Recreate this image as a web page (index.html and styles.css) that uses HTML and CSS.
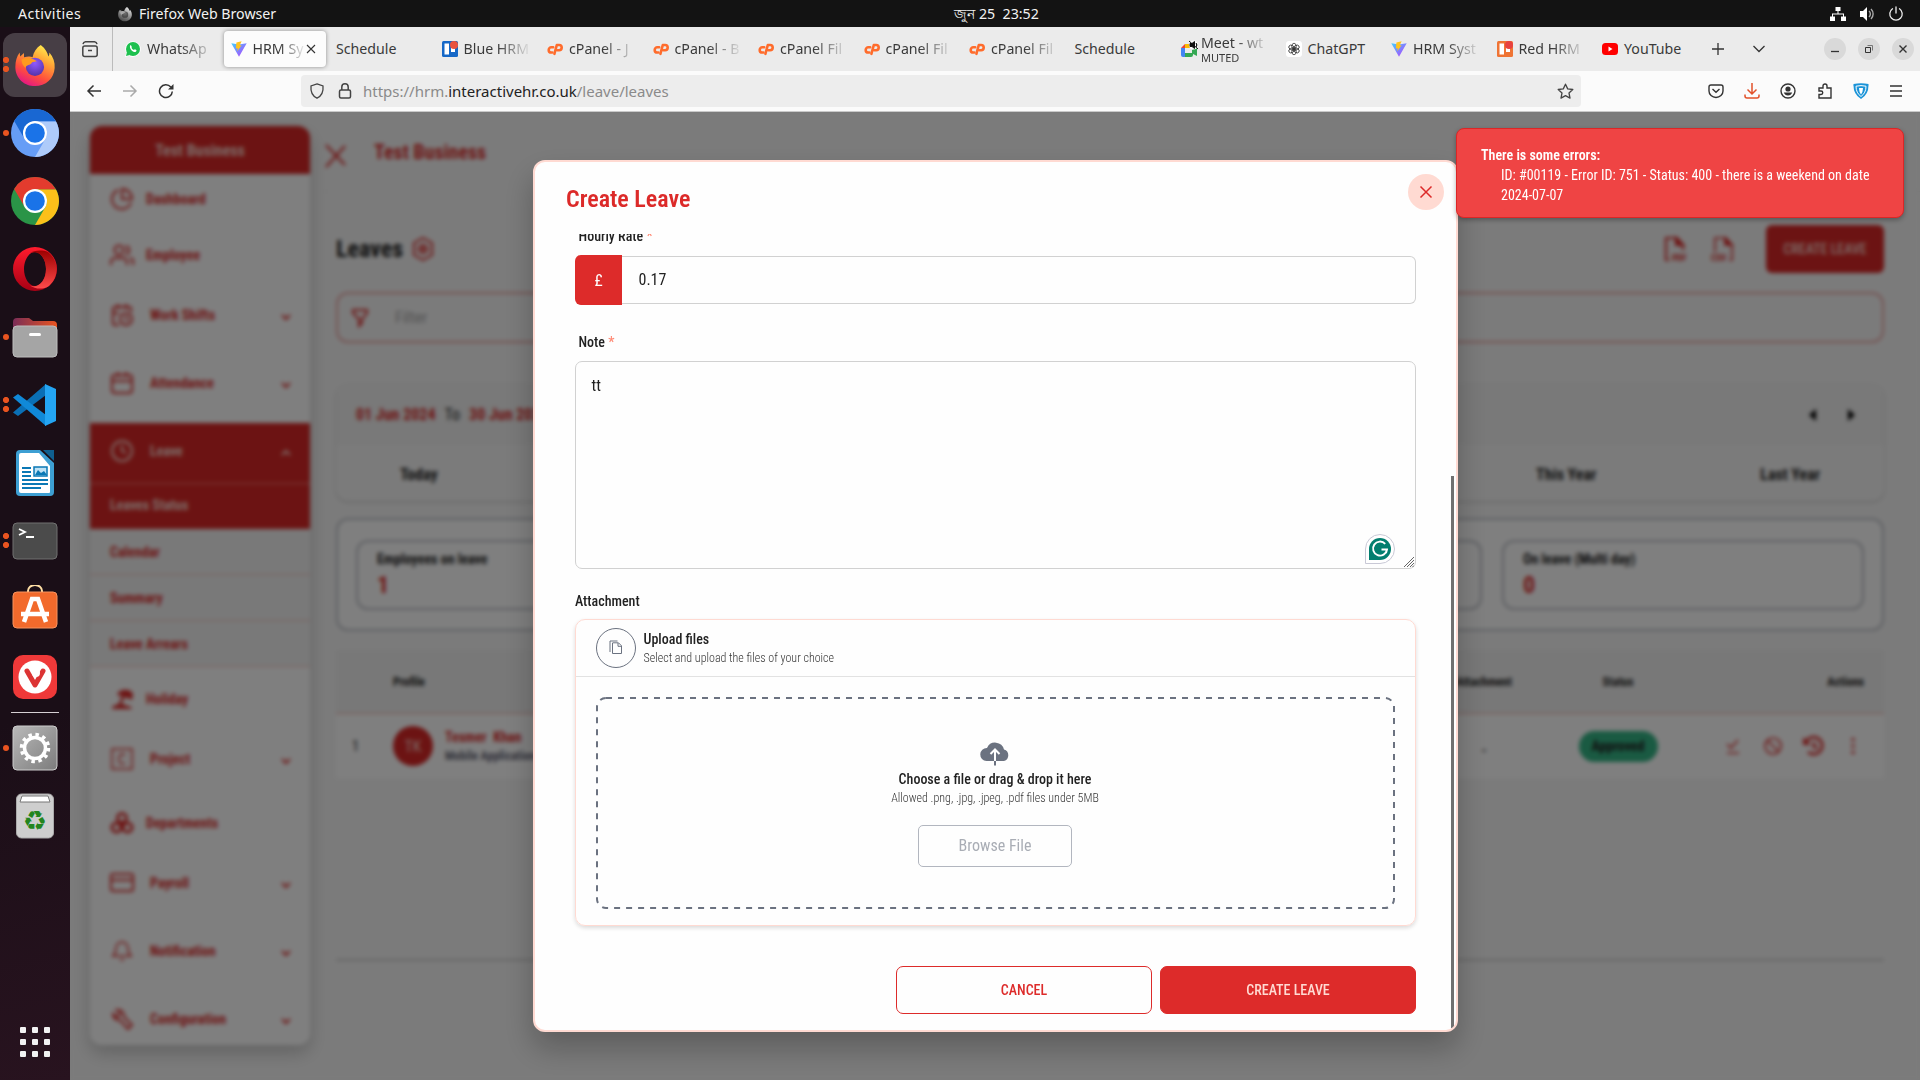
FILE: index.html
```html
<!DOCTYPE html>
<html lang="en">
<head>
<meta charset="utf-8">
<title>HRM System</title>
<link rel="stylesheet" href="styles.css">
</head>
<body>
<svg class="defs" width="0" height="0">
  <defs>
    <linearGradient id="vite-a" x1="0" y1="0" x2="1" y2="1"><stop offset="0" stop-color="#41d1ff"/><stop offset="1" stop-color="#bd34fe"/></linearGradient>
    <linearGradient id="fox-a" x1="0.8" y1="0" x2="0.3" y2="1"><stop offset="0" stop-color="#fff44f"/><stop offset="0.35" stop-color="#ffa436"/><stop offset="0.7" stop-color="#ff4f3c"/><stop offset="1" stop-color="#e31587"/></linearGradient>
    <radialGradient id="fox-b" cx="0.5" cy="0.3" r="0.8"><stop offset="0" stop-color="#9059ff"/><stop offset="1" stop-color="#4b2d9c"/></radialGradient>
    <linearGradient id="steel" x1="0" y1="0" x2="1" y2="1"><stop offset="0" stop-color="#b9b9b9"/><stop offset="1" stop-color="#7c7c7c"/></linearGradient>
    <linearGradient id="folder" x1="0" y1="0" x2="1" y2="0"><stop offset="0" stop-color="#7a2d57"/><stop offset="1" stop-color="#e95420"/></linearGradient>
    <linearGradient id="opera-a" x1="0" y1="0" x2="0" y2="1"><stop offset="0" stop-color="#ff1b2d"/><stop offset="1" stop-color="#a70014"/></linearGradient>
    <linearGradient id="opera-b" x1="0" y1="0" x2="0" y2="1"><stop offset="0" stop-color="#9c0000"/><stop offset="1" stop-color="#ff4b4b"/></linearGradient>
    <symbol id="cpanel" viewBox="0 0 16 16"><g fill="none" stroke="#ff6c2c" stroke-width="2.6" stroke-linecap="round" stroke-linejoin="round"><path d="M6.2 6.3H4.3a2.6 2.6 0 0 0 0 5.2h1"/><path d="M7.4 12.8 9.8 4h2.3a2.6 2.6 0 0 1 0 5.2h-1.6"/></g></symbol>
    <symbol id="vite" viewBox="0 0 16 16"><path d="M.3 2.2 8 15.7l7.7-13.5L8 3.6z" fill="url(#vite-a)"/><path d="M10.6.3 5.4 1.4l-.5 6.2 1.9-.4-.6 3 4.4-5.9-1.9.3z" fill="#ffc51f"/></symbol>
    <symbol id="fox" viewBox="0 0 48 48"><path d="M30 3c5 4 7 8 8 12 1-1 1-3 1-4 4 5 6 10 5.500 16C44 38 35 46 24 46S3.500 38 3.500 26C3.500 20 5 15 8 11l.5 4 4-3.500V16c4-1 7-1 9 0 1-6 4-10 8.500-13z" fill="url(#fox-a)"/><circle cx="24" cy="26" r="9.500" fill="url(#fox-b)"/><path d="M10 18c5-2 10-2 16 2l-5 1c-2 4-6 2-7 6-3-3-4-5-4-9z" fill="#ff9a1f"/></symbol>
    <symbol id="down" viewBox="0 0 24 24"><path d="m6 9 6 6 6-6" fill="none" stroke="currentColor" stroke-width="3"/></symbol>
  </defs>
</svg>

<header class="topbar">
  <span class="topbar-activities">Activities</span>
  <span class="topbar-app"><svg class="gray" width="16" height="16"><use href="#fox"/></svg>Firefox Web Browser</span>
  <span class="topbar-clock">জুন 25&nbsp; 23:52</span>
  <span class="topbar-status">
    <svg width="16" height="16" viewBox="0 0 16 16" fill="#fff"><path d="M5.500 1h5v4h-2v2.500H14v3h2v4.500h-5v-4.500h2V8.500H3v2h2V15H0v-4.500h2v-3h5.500V5h-2z"/></svg>
    <svg width="16" height="16" viewBox="0 0 16 16" fill="#fff"><path d="M1 5h3l4-4v14l-4-4H1z"/><path d="M10 5a4 4 0 0 1 0 6M12 3a7 7 0 0 1 0 10" fill="none" stroke="#aaa" stroke-width="1.400"/></svg>
    <svg width="16" height="16" viewBox="0 0 16 16" fill="none" stroke="#eee" stroke-width="1.300" stroke-linecap="round"><path d="M8 1v6M4.500 2.800a6.200 6.200 0 1 0 7 0"/></svg>
  </span>
</header>

<div class="desktop">
<nav class="dock">
  <div class="dock-slot active dots2"><svg width="46" height="46"><use href="#fox"/></svg></div>
  <div class="dock-slot dots1"><svg width="48" height="48" viewBox="0 0 48 48"><circle cx="24" cy="24" r="24" fill="#669df6"/><path d="M24 0a24 24 0 0 1 21 12.400H24A12 12 0 0 0 13.600 30L3.200 12A24 24 0 0 1 24 0z" fill="#1967d2"/><path d="M45 12.400A24 24 0 0 1 24 48l10.400-18A12 12 0 0 0 24 12.400z" fill="#aecbfa"/><circle cx="24" cy="24" r="12" fill="#fff"/><circle cx="24" cy="24" r="9.800" fill="#1a73e8"/></svg></div>
  <div class="dock-slot"><svg width="48" height="48" viewBox="0 0 48 48"><circle cx="24" cy="24" r="24" fill="#2a9447"/><path d="M24 0a24 24 0 0 1 21 12.400H24A12 12 0 0 0 13.600 30L3.200 12A24 24 0 0 1 24 0z" fill="#e33b2e"/><path d="M45 12.400A24 24 0 0 1 24 48l10.400-18A12 12 0 0 0 24 12.400z" fill="#fcc01a"/><circle cx="24" cy="24" r="12" fill="#fff"/><circle cx="24" cy="24" r="9.800" fill="#1a73e8"/></svg></div>
  <div class="dock-slot"><svg width="44" height="44" viewBox="0 0 44 44"><path d="M22 0a22 22 0 1 0 0 44 22 22 0 0 0 0-44zm0 5c6 0 11 8 11 17s-5 17-11 17-11-8-11-17S16 5 22 5z" fill="url(#opera-a)" fill-rule="evenodd"/><path d="M17 6c3-2 11-4 18-1a22 22 0 0 1 1 34c-6 4-14 3-19-.5 8 3 16-4 16-16.500S25 3 17 6z" fill="url(#opera-b)"/></svg></div>
  <div class="dock-slot dots1"><svg width="46" height="42" viewBox="0 0 46 42"><path d="M1 6a4 4 0 0 1 4-4h12l4 3h20a4 4 0 0 1 4 4v12H1z" fill="url(#folder)"/><rect x="1" y="10" width="44" height="31" rx="4" fill="#a5a5a5" stroke="#bdbdbd"/><rect x="17" y="17" width="12" height="3" rx="1.500" fill="#fff"/></svg></div>
  <div class="dock-slot dots2"><svg width="44" height="44" viewBox="0 0 44 44"><path d="M0 29.500 5 33 33 12V1z" fill="#0a6fb5"/><path d="M0 14.500 5 11l28 21v11L0 14.500z" fill="#1089d8"/><path d="M32 1l11 5v32l-11 5z" fill="#24a5f3"/></svg></div>
  <div class="dock-slot"><svg width="38" height="46" viewBox="0 0 38 46"><path d="M4 0h20l14 13v29a4 4 0 0 1-4 4H4a4 4 0 0 1-4-4V4a4 4 0 0 1 4-4z" fill="#3d9fd3"/><path d="M27 0h11v11z" fill="#0f5f8f"/><path d="M5 3h18l11 13v26a1 1 0 0 1-1 1H5a2 2 0 0 1-2-2V5a2 2 0 0 1 2-2z" fill="#fff"/><g fill="#0a78b5"><path d="M6 17h9v2H6zM6 21h9v2H6zM6 25h9v2H6zM6 29h26v2H6zM6 33h26v2H6zM6 37h19v2H6z"/></g><path d="M18 17h13v9H18z" fill="#bfe2f5" stroke="#0a78b5" stroke-width="1.500"/><path d="m19 25 3-5 3 3 3-2 3 4z" fill="#0a78b5"/></svg></div>
  <div class="dock-slot dots2"><svg width="46" height="38" viewBox="0 0 46 38"><rect x="1" y="1" width="44" height="36" rx="4" fill="#4b4b4b" stroke="#707070"/><path d="m7 7 6 3-6 3M14 15h8" fill="none" stroke="#fff" stroke-width="1.800"/></svg></div>
  <div class="dock-slot lift"><svg width="46" height="44" viewBox="0 0 46 44"><path d="M16 9V6a7 6 0 0 1 14 0v3" fill="none" stroke="#ffdfa5" stroke-width="2"/><rect x="1" y="7" width="44" height="36" rx="4" fill="#f26a2c" stroke="#f7935f"/><path d="m12 37 8-23h6l8 23M9 29h28" fill="none" stroke="#fff" stroke-width="4.500"/></svg></div>
  <div class="dock-slot"><svg width="44" height="44" viewBox="0 0 44 44"><rect width="44" height="44" rx="10" fill="#ef3939"/><circle cx="22" cy="22" r="16.500" fill="#fff"/><path d="m14 16 8 14 8-14" fill="none" stroke="#dc3434" stroke-width="5" stroke-linecap="round" stroke-linejoin="round"/><circle cx="23" cy="18" r="4" fill="#fff"/></svg></div>
  <div class="dock-rule"></div>
  <div class="dock-slot dots1"><svg width="46" height="46" viewBox="0 0 46 46"><rect x="1" y="1" width="44" height="44" rx="4" fill="url(#steel)" stroke="#ccc"/><circle cx="23" cy="23" r="10.500" fill="none" stroke="#fff" stroke-width="3.500"/><circle cx="23" cy="23" r="13.500" fill="none" stroke="#fff" stroke-width="3.500" stroke-dasharray="3.500 3.570"/></svg></div>
  <div class="dock-slot"><svg width="38" height="46" viewBox="0 0 38 46"><rect x=".5" y="1" width="37" height="44" rx="5" fill="#cecece" stroke="#aaa"/><path d="M4 9 6 3h26l2 6z" fill="#fff" stroke="#777"/><text x="19" y="37" text-anchor="middle" class="recycle">♻</text></svg></div>
  <div class="dock-apps"><i></i><i></i><i></i><i></i><i></i><i></i><i></i><i></i><i></i></div>
</nav>

<section class="browser">
  <div class="tabs">
    <div class="tab-view"><svg width="18" height="18" viewBox="0 0 18 18" fill="none" stroke="#444" stroke-width="1.500"><rect x="1.800" y="6" width="14.400" height="10.500" rx="2"/><path d="M2 4.200a3 3 0 0 1 2.500-2.400h9A3 3 0 0 1 16 4.200M7 10.500h4"/></svg></div>
    <div class="tab"><svg width="16" height="16" viewBox="0 0 16 16"><path d="M0 16l1.200-4A7.800 7.800 0 1 1 4.300 15z" fill="#fff"/><circle cx="8" cy="8" r="7" fill="#1dc04e"/><path d="M1 15l1-4 3 3z" fill="#1dc04e"/><path d="M5 4.500c1-.8 1.500.5 1.800 1.500-.8 1 .8 2.800 2.200 3 .8-1 1-.8 2.500.3 0 1.500-1 2-2.500 1.700C6.500 10 4.500 7.500 5 4.500z" fill="#fff"/></svg><span class="fade">WhatsAp</span></div>
    <div class="tab current"><svg width="16" height="16"><use href="#vite"/></svg><span class="fade">HRM Sy</span><svg class="x" width="10" height="10" viewBox="0 0 10 10"><path d="m1 1 8 8M9 1 1 9" stroke="#333" stroke-width="1.100"/></svg></div>
    <div class="tab"><span class="fade">Schedule</span></div>
    <div class="tab"><svg width="16" height="16" viewBox="0 0 16 16"><rect width="16" height="16" rx="1.500" fill="#1668c7"/><rect x="2.500" y="2.500" width="4.500" height="11" fill="#fff"/><rect x="9" y="6" width="4" height="5" fill="#fff"/><circle cx="12" cy="4" r="4" fill="#e8523f"/></svg><span class="fade">Blue HRM</span></div>
    <div class="tab"><svg width="16" height="16"><use href="#cpanel"/></svg><span class="fade">cPanel - J</span></div>
    <div class="tab"><svg width="16" height="16"><use href="#cpanel"/></svg><span class="fade">cPanel - B</span></div>
    <div class="tab"><svg width="16" height="16"><use href="#cpanel"/></svg><span class="fade">cPanel Fil</span></div>
    <div class="tab"><svg width="16" height="16"><use href="#cpanel"/></svg><span class="fade">cPanel Fil</span></div>
    <div class="tab"><svg width="16" height="16"><use href="#cpanel"/></svg><span class="fade">cPanel Fil</span></div>
    <div class="tab"><span class="fade">Schedule</span></div>
    <div class="tab"><svg width="18" height="18" viewBox="0 0 18 18"><path d="M1 8 5 4v4z" fill="#ea4335"/><path d="M5 4h7v4H5z" fill="#fbbc04"/><path d="M1 8h4v9H3a2 2 0 0 1-2-2z" fill="#4285f4"/><path d="M5 13h7v-3l5-3v9l-4-2v1a2 2 0 0 1-2 2H5z" fill="#34a853"/><circle cx="13.500" cy="5" r="4.500" fill="#fff"/><path d="M10 3.500h2l2.500-2v7L12 6.500h-2zM9 1l9 8M16 3q2 2 0 4" stroke="#111" fill="#111"/></svg><span class="fade two">Meet - wt<small>MUTED</small></span></div>
    <div class="tab"><svg width="16" height="16" viewBox="0 0 16 16"><rect width="16" height="16" rx="3" fill="#fff"/><g fill="none" stroke="#333" stroke-width=".8"><ellipse cx="8" cy="5.500" rx="2.200" ry="3.300"/><ellipse cx="8" cy="5.500" rx="2.200" ry="3.300" transform="rotate(60 8 8)"/><ellipse cx="8" cy="5.500" rx="2.200" ry="3.300" transform="rotate(120 8 8)"/><ellipse cx="8" cy="5.500" rx="2.200" ry="3.300" transform="rotate(180 8 8)"/><ellipse cx="8" cy="5.500" rx="2.200" ry="3.300" transform="rotate(240 8 8)"/><ellipse cx="8" cy="5.500" rx="2.200" ry="3.300" transform="rotate(300 8 8)"/></g></svg><span class="fade full">ChatGPT</span></div>
    <div class="tab"><svg width="16" height="16"><use href="#vite"/></svg><span class="fade">HRM Syst</span></div>
    <div class="tab"><svg width="16" height="16" viewBox="0 0 16 16"><rect width="16" height="16" rx="1.500" fill="#ef7434"/><rect x="2.500" y="2.500" width="4.500" height="11" fill="#fff"/><rect x="9" y="6" width="4" height="5" fill="#fff"/><circle cx="12" cy="4" r="4" fill="#e8423f"/></svg><span class="fade">Red HRM</span></div>
    <div class="tab"><svg width="16" height="16" viewBox="0 0 16 16"><rect y="2" width="16" height="12" rx="3.500" fill="#f00"/><path d="m6.500 5.500 4 2.500-4 2.500z" fill="#fff"/></svg><span class="fade full">YouTube</span></div>
    <div class="tab-tools">
      <svg width="14" height="14" viewBox="0 0 14 14" stroke="#333" stroke-width="1.300"><path d="M7 1v12M1 7h12"/></svg>
      <svg width="14" height="14" viewBox="0 0 14 14" fill="none" stroke="#333" stroke-width="1.300"><path d="m1.500 4 5.500 5.500L12.500 4"/></svg>
    </div>
    <div class="window-buttons">
      <span><svg width="10" height="10" viewBox="0 0 10 10"><path d="M1 7.500h8" stroke="#333" stroke-width="1.300"/></svg></span>
      <span><svg width="10" height="10" viewBox="0 0 10 10" fill="none" stroke="#333"><path d="M1.500 3.500h5v5h-5z"/><path d="M3.500 1.500h5v5" stroke="#777"/></svg></span>
      <span><svg width="10" height="10" viewBox="0 0 10 10"><path d="m1.500 1.500 7 7M8.500 1.500l-7 7" stroke="#333" stroke-width="1.400"/></svg></span>
    </div>
  </div>

  <div class="toolbar">
    <div class="history">
      <svg width="16" height="16" viewBox="0 0 16 16" fill="none" stroke="#333" stroke-width="1.500"><path d="M15 8H2M7.500 2.500 2 8l5.500 5.500"/></svg>
      <svg width="16" height="16" viewBox="0 0 16 16" fill="none" stroke="#aaa" stroke-width="1.500"><path d="M1 8h13M8.500 2.500 14 8l-5.500 5.500"/></svg>
      <svg width="16" height="16" viewBox="0 0 16 16" fill="none" stroke="#333" stroke-width="1.500"><path d="M14.300 8.500A6.400 6.400 0 1 1 12.800 4"/><path d="M15.500 1v5.500H10z" fill="#333" stroke="none"/></svg>
    </div>
    <div class="urlbar">
      <svg width="16" height="16" viewBox="0 0 16 16" fill="none" stroke="#444" stroke-width="1.300"><path d="M8 .9 14 3c.5 5-1.500 10-6 12.200C3.500 13 1.500 8 2 3z"/></svg>
      <svg class="lock" width="14" height="16" viewBox="0 0 14 16" fill="none" stroke="#444" stroke-width="1.500"><rect x="1.500" y="7" width="11" height="8" rx="1.500"/><path d="M3.800 7V4a3.200 3.200 0 0 1 6.400 0v3"/></svg>
      <span class="url">https://hrm.<b>interactivehr.co.uk</b>/leave/leaves</span>
      <svg class="star" width="17" height="17" viewBox="0 0 17 17" fill="none" stroke="#444" stroke-width="1.300" stroke-linejoin="round"><path d="m8.500 1.200 2.200 4.700 5.100.6-3.800 3.500 1 5.100-4.500-2.500L4 15.100l1-5.100L1.200 6.500l5.100-.6z"/></svg>
    </div>
    <div class="extensions">
      <svg width="16" height="16" viewBox="0 0 16 16" fill="none" stroke="#333" stroke-width="1.400"><path d="M3 2h10a2 2 0 0 1 2 2v4A7 6.500 0 0 1 1 8V4a2 2 0 0 1 2-2z"/><path d="M4.500 6 8 9.300 11.500 6"/></svg>
      <svg width="16" height="16" viewBox="0 0 16 16" fill="none" stroke="#e2512a" stroke-width="1.500"><path d="M8 0v10.500M3.500 6.500 8 11l4.500-4.500M1 11.500V13a2 2 0 0 0 2 2h10a2 2 0 0 0 2-2v-1.500"/></svg>
      <svg width="16" height="16" viewBox="0 0 16 16"><circle cx="8" cy="8" r="7" fill="none" stroke="#333" stroke-width="1.400"/><circle cx="8" cy="6" r="2.600" fill="#333"/><path d="M3.800 9.500h8.400a4.500 4.500 0 0 1-8.400 0z" fill="#333"/></svg>
      <svg width="16" height="16" viewBox="0 0 16 16" fill="none" stroke="#333" stroke-width="1.400"><path d="M2 5h4V3a2 2 0 0 1 4 0v2h4v10H2v-3.500h2a1.700 1.700 0 0 0 0-3.500H2z"/></svg>
      <svg width="16" height="16" viewBox="0 0 16 16"><path d="M.5 1Q8-.5 15.500 1 16 11 8 16 0 11 .5 1z" fill="#1c94d8"/><path d="M3 3.200Q8 2 13 3.200 13 10 8 13.500 3 10 3 3.200z" fill="none" stroke="#fff"/><path d="M6 5h4q0 4-2 6.500Q6 9 6 5z" fill="#fff"/></svg>
      <svg width="14" height="16" viewBox="0 0 14 16" stroke="#333" stroke-width="1.400"><path d="M1 3h12M1 8h12M1 13h12"/></svg>
    </div>
  </div>

  <div class="page">
    <div class="app">
      <aside class="sidebar">
        <div class="brand">Test Business</div>
        <a class="item first"><svg viewBox="0 0 24 24"><path d="M21 15.500A9.800 9.800 0 1 1 8.500 3M22 12A10 10 0 0 0 12 2v10z"/></svg>Dashboard</a>
        <a class="item"><svg viewBox="0 0 24 24"><circle cx="9" cy="7" r="4.500"/><path d="M1 22v-3a4 4 0 0 1 4-4h8a4 4 0 0 1 4 4v3M16 3a4.500 4.500 0 0 1 0 8.500M23 22v-3a4 4 0 0 0-3-4"/></svg>Employee</a>
        <a class="item wide"><svg viewBox="0 0 24 24"><path d="M21 9V6a2 2 0 0 0-2-2H5a2 2 0 0 0-2 2v14a2 2 0 0 0 2 2h4M8 1v5M16 1v5M3 10h6"/><circle cx="16" cy="16" r="6"/><path d="M16 13v3l2 1"/></svg>Work Shifts<svg class="chev"><use href="#down"/></svg></a>
        <a class="item wide"><svg viewBox="0 0 24 24"><rect x="2" y="4" width="20" height="18" rx="3"/><path d="M8 1v5M16 1v5M2 10h20"/></svg>Attendance<svg class="chev"><use href="#down"/></svg></a>
        <a class="item wide open"><svg viewBox="0 0 24 24"><circle cx="12" cy="12" r="10"/><path d="M12 6v6l4 2"/></svg>Leave<svg class="chev up"><use href="#down"/></svg></a>
        <a class="sub on">Leaves Status</a>
        <a class="sub">Calendar</a>
        <a class="sub">Summary</a>
        <a class="sub">Leave Arrears</a>
        <a class="item after"><svg class="solid" viewBox="0 0 24 24"><path d="M7 8A8.500 7 0 0 1 23 7l-1 6-7-3-4 7h3q1 2 4 2 3 0 4 3H2q0-4 5-4 2-1 2-2l3-7z"/></svg>Holiday</a>
        <a class="item wide"><svg class="thin" viewBox="0 0 24 24"><rect x="2" y="2" width="20" height="20"/><path d="M15 9q-1-2-3-2-3 0-3 5t3 5q2 0 3-2"/></svg>Project<svg class="chev"><use href="#down"/></svg></a>
        <a class="item"><svg class="heavy" viewBox="0 0 24 24"><circle cx="12" cy="7" r="4.500"/><circle cx="6.500" cy="16.500" r="4.500"/><circle cx="17.500" cy="16.500" r="4.500"/><circle cx="12" cy="13" r="1.500"/></svg>Departments</a>
        <a class="item wide"><svg viewBox="0 0 24 24"><rect x="1" y="3" width="22" height="17" rx="2"/><path d="M1 9h22"/></svg>Payroll<svg class="chev"><use href="#down"/></svg></a>
        <a class="item wide"><svg class="thin" viewBox="0 0 24 24"><path d="M3 17c2-2 3-4 3-8a6 6 0 0 1 12 0c0 4 1 6 3 8zM10 21h4"/></svg>Notification<svg class="chev"><use href="#down"/></svg></a>
        <a class="item wide"><svg viewBox="0 0 24 24"><path d="M3 7l4 3 3-2-1-4-2-1a6 6 0 0 1 7 7l8 8-4 4-8-9A6 6 0 0 1 3 7z"/></svg>Configuration<svg class="chev"><use href="#down"/></svg></a>
      </aside>

      <main class="main">
        <div class="main-top"><svg width="22" height="24" viewBox="0 0 22 24"><path d="m1 1 19 20M20 2 1 23" stroke="#dc2a29" stroke-width="2.200"/></svg><h1>Test Business</h1></div>
        <div class="heading">
          <h2>Leaves</h2>
          <svg width="24" height="24" viewBox="0 0 24 24" fill="none" stroke="#dc2a29" stroke-width="2"><path d="m12 1 9 5v12l-9 5-9-5V6z"/><circle cx="12" cy="12" r="4"/><circle cx="12" cy="12" r="1"/></svg>
          <span class="exports">
            <svg width="24" height="26" viewBox="0 0 24 26" fill="none" stroke="#dc2a29" stroke-width="2.200"><path d="M5 24H2V2h11l6 7v5"/><path d="M12 2v7h7z" fill="#dc2a29"/><text x="8" y="25">PDF</text></svg>
            <svg width="24" height="26" viewBox="0 0 24 26" fill="none" stroke="#dc2a29" stroke-width="1.700"><path d="M4 16V2h11l6 7v15h-3"/><path d="M14 2v7h7z" fill="#dc2a29"/><text x="0" y="25">CSV</text></svg>
          </span>
          <span class="btn-create">CREATE LEAVE</span>
        </div>
        <div class="filter"><svg width="20" height="20" viewBox="0 0 20 20" fill="none" stroke="#dc2a29" stroke-width="2"><path d="M2 2h14v3l-5 6v4l-3 3v-7L2 5z"/></svg><span>Filter</span></div>
        <div class="dates">
          <div class="dates-head"><b>01 Jun 2024</b><span>To</span><b>30 Jun 2024</b>
            <span class="arrows"><svg width="8" height="12"><path d="M8 0v12L1 6z"/></svg><svg width="8" height="12"><path d="M0 0v12l7-6z"/></svg></span></div>
          <div class="dates-row"><span>Today</span><span class="end">This Year</span><span>Last Year</span></div>
        </div>
        <div class="stats">
          <div><small>Employees on leave</small><strong>1</strong></div>
          <div></div>
          <div></div>
          <div><small>On leave (Multi day)</small><strong>0</strong></div>
        </div>
        <div class="table">
          <div class="row head"><span></span><span>Profile</span><span class="mid">Attachment</span><span class="mid">Status</span><span class="right">Actions</span></div>
          <div class="row"><span class="num">1</span>
            <span class="profile"><i>TK</i><span><b>Tesmer &nbsp;Khan</b><em>Mobile Application</em></span></span>
            <span class="mid dash">-</span>
            <span class="mid"><span class="pill">Approved</span></span>
            <span class="actions">
              <svg viewBox="0 0 22 22"><path d="m5 9 4 4 7-8M5 18h12"/></svg>
              <svg viewBox="0 0 22 22"><circle cx="11" cy="11" r="8"/><path d="m5 5 12 12"/></svg>
              <svg viewBox="0 0 22 22"><path d="M4 7a8.500 8.500 0 1 1 2 10M12 7v4.500l3 2" stroke-width="2.800"/><path d="M1 2v8h8z" fill="#dc2a29" stroke="none"/></svg>
              <svg viewBox="0 0 22 22"><path d="M11 3v3M11 9.500v3M11 16v3" stroke-width="3"/></svg>
            </span></div>
        </div>
        <div class="rule"></div>
      </main>
    </div>

    <div class="overlay">
      <div class="modal">
        <div class="modal-head"><h3>Create Leave</h3><span class="close"><svg width="14" height="14" viewBox="0 0 14 14"><path d="m1.500 1.500 11 11M12.500 1.500l-11 11" stroke="#dc2a29" stroke-width="1.500"/></svg></span></div>
        <div class="modal-body">
          <div class="label cut">Hourly Rate <i>*</i></div>
          <div class="money"><span class="currency">£</span><span class="value">0.17</span></div>
          <div class="label note-label">Note <i>*</i></div>
          <div class="note">tt
            <svg class="grammar" width="30" height="30" viewBox="0 0 30 30"><path d="M.5 29.500V15A14.500 14.500 0 1 1 15 29.500z" fill="#fff" stroke="#c9c9d6"/><path d="M4 26V15A11 11 0 1 1 15 26z" fill="#027e6f"/><path d="M20.200 9.800A7 7 0 1 0 22 15.500h-5.500M22 15.500l-1 3.500" fill="none" stroke="#fff" stroke-width="1.900"/></svg>
            <svg class="grip" width="10" height="10" viewBox="0 0 10 10"><path d="m0 10 10-10M3 10l7-7M6 10l4-4M8.500 10l1.500-1.500" stroke="#666"/></svg>
          </div>
          <div class="label attach-label">Attachment</div>
          <div class="upload">
            <div class="upload-head">
              <span class="ring"><svg width="14" height="16" viewBox="0 0 14 16" fill="none" stroke="#6b7280" stroke-width="1"><path d="M3.500 3v10.500h9V5.800L9.500 2.800h-6M9 3v3.300h3.500"/><path d="M1 12V1h7.500"/></svg></span>
              <div><b>Upload files</b><small>Select and upload the files of your choice</small></div>
            </div>
            <div class="drop">
              <svg class="dashes" width="799" height="212"><rect x="1" y="1" width="797" height="210" rx="9"/></svg>
              <svg width="30" height="25" viewBox="0 0 30 25"><path d="M6.500 20A6.500 6.500 0 0 1 7 7a9 9 0 0 1 17 1.500A6 6 0 0 1 24 20z" fill="#6b7280"/><path d="M15 20V9M10.500 13 15 8.500 19.500 13" fill="none" stroke="#fff" stroke-width="2"/><path d="M15 20v4.500" stroke="#6b7280" stroke-width="2"/></svg>
              <b>Choose a file or drag &amp; drop it here</b>
              <small>Allowed .png, .jpg, .jpeg, .pdf files under 5MB</small>
              <span class="browse">Browse File</span>
            </div>
          </div>
          <div class="buttons"><span class="cancel">CANCEL</span><span class="submit">CREATE LEAVE</span></div>
        </div>
        <div class="scrollbar"></div>
      </div>
    </div>

    <div class="toast"><b>There is some errors:</b><p>ID: #00119 - Error ID: 751 - Status: 400 - there is a weekend on date 2024-07-07</p></div>
  </div>
</section>
</div>
</body>
</html>
```
FILE: styles.css
```css
* { box-sizing: border-box; }
body { margin: 0; width: 1920px; height: 1080px; overflow: hidden; font-family: "Roboto Condensed", Roboto, sans-serif; font-stretch: 75%; color: #222; }
svg { display: block; flex: none; }
h1, h2, h3, p { margin: 0; }
b, i, em { font-style: normal; }
.defs { position: absolute; }

/* system bar */
.topbar { height: 27px; background: #131313; color: #f2f2f2; display: grid; grid-template-columns: 104px 1fr auto 1fr; align-items: center; padding: 0 16px 0 18px; font: 14.200px/27px "Noto Sans", sans-serif; }
.topbar-activities { letter-spacing: .4px; }
.topbar-app { display: flex; align-items: center; gap: 6px; margin-left: -5px; }
.topbar-clock { margin-left: -33px; }
.topbar-status { display: flex; justify-content: flex-end; gap: 13px; }
.gray { filter: grayscale(1); }

.desktop { display: flex; height: 1053px; }

/* dock */
.dock { width: 70px; height: 1053px; background: linear-gradient(165deg, #1a0e17 65%, #28131f); display: flex; flex-direction: column; padding-top: 4px; }
.dock-slot { position: relative; height: 68px; display: flex; align-items: center; justify-content: center; }
.dock-slot.active::after { content: ""; position: absolute; inset: 2px 3px; border-radius: 12px; background: rgba(255, 255, 255, .2); }
.dock-slot svg { position: relative; z-index: 1; }
.lift { padding-bottom: 4px; }
.dock-slot::before { position: absolute; z-index: 2; left: 3px; width: 6px; border-radius: 3px; }
.dots1::before { content: ""; top: 31px; height: 6px; background: #e95420; }
.dots2::before { content: ""; top: 26px; height: 15px; border-radius: 0; background: radial-gradient(circle at 3px 3px, #e95420 2.800px, transparent 3.200px), radial-gradient(circle at 3px 12px, #e95420 2.800px, transparent 3.200px); }
.dock-rule { height: 1px; margin: 1px 11px 1px; background: #d5cfd3; }
.recycle { font: 27px "DejaVu Sans", sans-serif; fill: #23851e; }
.dock-apps { margin: auto auto 23px; display: grid; grid-template-columns: repeat(3, 6px); gap: 6px; }
.dock-apps i { height: 6px; border-radius: 1px; background: #f2f2f2; }

/* browser chrome */
.browser { width: 1850px; }
.tabs { height: 44px; background: #ebebeb; display: flex; align-items: center; font: 14.200px/20px "Noto Sans", sans-serif; color: #3a3a3a; }
.tab-view { width: 43px; height: 44px; margin-right: 4px; border-right: 1px solid #bbb; display: flex; align-items: center; padding-left: 11px; }
.tab { width: 105.500px; height: 36px; padding: 0 8px; display: flex; align-items: center; gap: 6px; flex: none; }
.tab.current { background: #fcfcfc; border-radius: 4px; box-shadow: 0 0 4px rgba(0, 0, 0, .4); width: 102px; margin: 0 2.500px 0 1px; padding: 0 10px 0 7px; }
.tab .fade { flex: 1; white-space: nowrap; -webkit-mask-image: linear-gradient(90deg, #000 50%, rgba(0, 0, 0, .05) 98%); mask-image: linear-gradient(90deg, #000 50%, rgba(0, 0, 0, .05) 98%); }
.tab .fade:only-child, .tab .full { -webkit-mask-image: none; mask-image: none; }
.current .x { margin-left: -6px; }
.two { line-height: 17px; margin-left: -3px; }
.two small { display: block; font-size: 11px; line-height: 13px; }
.tab-tools { display: flex; gap: 27px; margin-left: 11px; }
.window-buttons { display: flex; gap: 12px; margin-left: auto; padding-right: 6px; }
.window-buttons span { width: 22px; height: 22px; border-radius: 50%; background: #d9d9d9; display: flex; align-items: center; justify-content: center; }
.toolbar { height: 41px; background: #fbfbfb; border-bottom: 1px solid #c9c9c9; display: flex; align-items: center; }
.history { display: flex; gap: 20px; padding-left: 16px; width: 231px; }
.urlbar { width: 1280px; height: 32px; border-radius: 4px; background: #ededed; display: flex; align-items: center; padding: 0 7px 0 8px; }
.lock { margin: 0 11px 0 13px; }
.url { font: 15px/20px "Noto Sans", sans-serif; color: #8a8a8a; }
.url b { font-weight: 400; color: #222; }
.star { margin-left: auto; }
.extensions { display: flex; gap: 20.200px; padding-left: 127px; }

/* page */
.page { position: relative; height: 968px; background: #f7f7f7; overflow: hidden; }
.app { display: flex; padding: 14px 36px 0 20px; gap: 26px; height: 968px; }
.sidebar { width: 220px; height: 919px; background: #fff; border-radius: 12px; box-shadow: 0 8px 18px rgba(0, 0, 0, .2); font-size: 14px; font-weight: 700; color: #dc2a29; overflow: hidden; }
.brand { height: 48px; background: #d92726; color: #fbd9d1; display: flex; align-items: center; justify-content: center; font-size: 16px; }
.item { height: 56px; display: flex; align-items: center; gap: 12px; padding: 0 16px 0 20px; }
.item svg { width: 24px; height: 24px; fill: none; stroke: currentColor; stroke-width: 2; }
.item svg.thin { stroke-width: 1.500; }
.item svg.heavy { stroke-width: 3; }
.item svg.solid { fill: currentColor; stroke: none; }
.item .chev { width: 16px; height: 16px; margin-left: auto; position: relative; top: 2px; }
.item .up { transform: rotate(180deg); }
.first { margin-top: -3px; }
.wide { gap: 16px; margin-top: 4px; }
.open { height: 60px; padding-bottom: 4px; background: #d92726; color: #fbd9d1; }
.wide + .wide { margin-top: 12px; }
.wide + .item:not(.wide) { margin-top: 8px; }
.sub { height: 46px; display: flex; align-items: center; padding-left: 20px; background: #f3f3f3; border-bottom: 1px solid #f3bcb5; }
.sub.on { background: #d92726; color: #fbd9d1; border-top: 1px solid #f58b81; border-bottom: 0; padding-bottom: 3px; }
.after { margin-top: 4px; }

.main { width: 1548px; display: flex; flex-direction: column; }
.main-top { height: 66px; display: flex; gap: 27px; margin: 0 -36px 0 -20px; padding: 18px 0 0 9px; border-bottom: 1px solid #f0f0f0; }
.main-top h1 { font-size: 20px; line-height: 24px; margin-top: -4px; color: #dc2a29; }
.heading { height: 48px; margin-top: 33px; display: flex; align-items: center; gap: 8px; }
.heading h2 { font-size: 24px; font-weight: 700; }
.exports { display: flex; gap: 23px; margin-left: auto; margin-right: 23px; }
.exports text { font-size: 9px; font-weight: 700; fill: #dc2a29; stroke: none; }
.btn-create { width: 118px; height: 48px; background: #d92726; color: #fbd9d1; border-radius: 6px; font-size: 14px; font-weight: 500; display: flex; align-items: center; justify-content: center; }
.filter { height: 51px; margin-top: 19px; border: 2px solid #eba7a5; border-radius: 12px; display: flex; align-items: center; gap: 24px; padding-left: 13px; color: #a5a5a5; font-size: 16px; }
.dates { height: 117px; margin-top: 41px; border-radius: 12px; box-shadow: 0 1px 3px rgba(0, 0, 0, .22); overflow: hidden; }
.dates-head { height: 61px; background: #f2f2f2; display: flex; align-items: center; gap: 9px; padding: 0 28px 0 20px; font-size: 16px; }
.dates-head b { color: #dc2a29; }
.arrows { margin-left: auto; display: flex; gap: 32px; }
.dates-row { display: flex; height: 58px; align-items: center; padding: 0 64px 0 64px; font-size: 16px; font-weight: 700; }
.dates-row .end { margin: 0 164px 0 auto; }
.stats { height: 113px; margin-top: 17px; border: 2px solid #bcbfc6; border-radius: 12px; background: #fff; padding: 20px 18px; display: grid; grid-template-columns: repeat(4, 1fr); gap: 20px; }
.stats div { height: 70px; border: 2px solid #bcbfc6; border-radius: 12px; padding: 7px 19px; }
.stats small { display: block; font-size: 14px; font-weight: 700; line-height: 20px; }
.stats strong { display: block; font-size: 24px; line-height: 32px; color: #dc2a29; }
.table { margin-top: 19px; }
.row { display: grid; grid-template-columns: 57px 1039px 104px 164px 164px; height: 64px; align-items: center; background: #fff; }
.head { background: #f1f1f1; border-bottom: 1px solid #f3a9a0; font-size: 12px; font-weight: 700; }
.mid { text-align: center; }
.dash { font-size: 18px; padding-top: 6px; }
.right { text-align: right; }
.num { padding-left: 16px; font-size: 14px; }
.profile { display: flex; align-items: center; gap: 12px; }
.profile i { width: 40px; height: 40px; border-radius: 50%; background: #d92726; color: #fbd9d1; font-size: 16px; display: flex; align-items: center; justify-content: center; }
.profile b, .profile em { display: block; font-size: 14px; line-height: 20px; }
.profile b { color: #dc2a29; }
.profile em { font-size: 12px; font-weight: 700; color: #667; line-height: 18px; }
.pill { display: inline-block; padding: 0 13px; line-height: 31px; border-radius: 16px; background: #34b585; font-size: 14px; font-weight: 700; }
.actions { display: flex; justify-content: flex-end; align-items: center; gap: 18px; }
.actions svg { width: 22px; height: 22px; fill: none; stroke: #dc2a29; stroke-width: 1.700; }
.rule { height: 2px; margin-top: 181px; background: #ccc; }

.overlay { position: absolute; inset: 0; background: rgba(0, 0, 0, .5); -webkit-backdrop-filter: blur(2.200px); backdrop-filter: blur(2.200px); }

/* dialog */
.modal { position: absolute; left: 463px; top: 48px; width: 925px; height: 872px; background: #fefefe; border: 2px solid #ffdad2; border-radius: 12px; box-shadow: 0 16px 30px rgba(0, 0, 0, .25); overflow: hidden; }
.modal-head { height: 72px; display: flex; justify-content: space-between; padding: 12px 12px 0 31px; }
.modal h3 { font-size: 24px; font-weight: 600; line-height: 50px; color: #dc2a29; }
.close { width: 36px; height: 36px; border-radius: 50%; background: #ffdad2; display: flex; align-items: center; justify-content: center; }
.modal-body { height: 796px; padding: 0 40px; overflow: hidden; }
.label { font-size: 14px; font-weight: 500; line-height: 20px; padding-left: 3.500px; color: #222; }
.label i { color: #ff8a75; }
.cut { margin-top: -8px; }
.money { height: 50px; margin-top: 9px; display: flex; align-items: center; font-size: 16px; }
.currency { width: 47px; height: 50px; border-radius: 6px 0 0 6px; background: #dd2b2a; color: #fff; display: flex; align-items: center; justify-content: center; }
.value { flex: 1; height: 48px; line-height: 46px; border: 1px solid #d1d1d1; border-left: 0; border-radius: 0 6px 6px 0; padding-left: 16.500px; }
.note-label { margin-top: 27px; }
.note { position: relative; height: 208px; margin-top: 9px; border: 1px solid #d1d1d1; border-radius: 7px; padding: 12px 15.500px; font-size: 16px; line-height: 24px; }
.grammar { position: absolute; right: 20px; bottom: 4px; }
.grip { position: absolute; right: 1px; bottom: 1px; }
.attach-label { margin-top: 22px; padding-left: 0; }
.upload { height: 307px; margin-top: 8px; border: 1px solid #ffdad2; border-radius: 10px; box-shadow: 0 2px 4px rgba(0, 0, 0, .14); }
.upload-head { height: 57px; display: flex; align-items: center; gap: 7.500px; padding-left: 20px; border-bottom: 1px solid #e2e2e2; }
.ring { width: 40px; height: 40px; border: 1px solid #6b7280; border-radius: 50%; display: flex; align-items: center; justify-content: center; }
.upload b, .upload small { display: block; font-size: 14px; font-weight: 500; line-height: 20px; }
.upload small { font-size: 12px; font-weight: 300; color: #333; line-height: 18px; }
.drop { position: relative; height: 212px; width: 799px; margin: 20px 0 0 20px; display: flex; flex-direction: column; align-items: center; padding: 44px 1px 0 0; }
.dashes { position: absolute; left: 0; top: 0; }
.dashes rect { fill: none; stroke: #6b7280; stroke-width: 2; stroke-dasharray: 6 6; }
.drop b { margin-top: 3px; }
.browse { width: 154px; height: 42px; margin-top: 18px; border: 1px solid #b2b6bf; border-radius: 5px; color: #a9adb5; font-size: 16px; line-height: 40px; text-align: center; }
.buttons { display: flex; justify-content: flex-end; gap: 8px; margin-top: 40px; }
.buttons span { width: 256px; height: 48px; line-height: 46px; border: 1px solid #dd2b2a; border-radius: 7px; text-align: center; color: #dd2b2a; font-size: 14px; font-weight: 500; }
.buttons .submit { background: #dd2b2a; color: #ffdad2; }
.scrollbar { position: absolute; right: 2px; top: 314px; width: 3px; height: 552px; background: #707070; }

/* error toast */
.toast { position: absolute; left: 1386px; top: 16px; width: 448px; height: 90px; padding: 16px 24px; background: #ef4444; border: 1px solid #dc2626; border-radius: 8px; box-shadow: 0 2px 5px rgba(0, 0, 0, .3); color: #fff; font-size: 14px; line-height: 20px; }
.toast b { font-weight: 600; }
.toast p { padding-left: 20px; }
```
